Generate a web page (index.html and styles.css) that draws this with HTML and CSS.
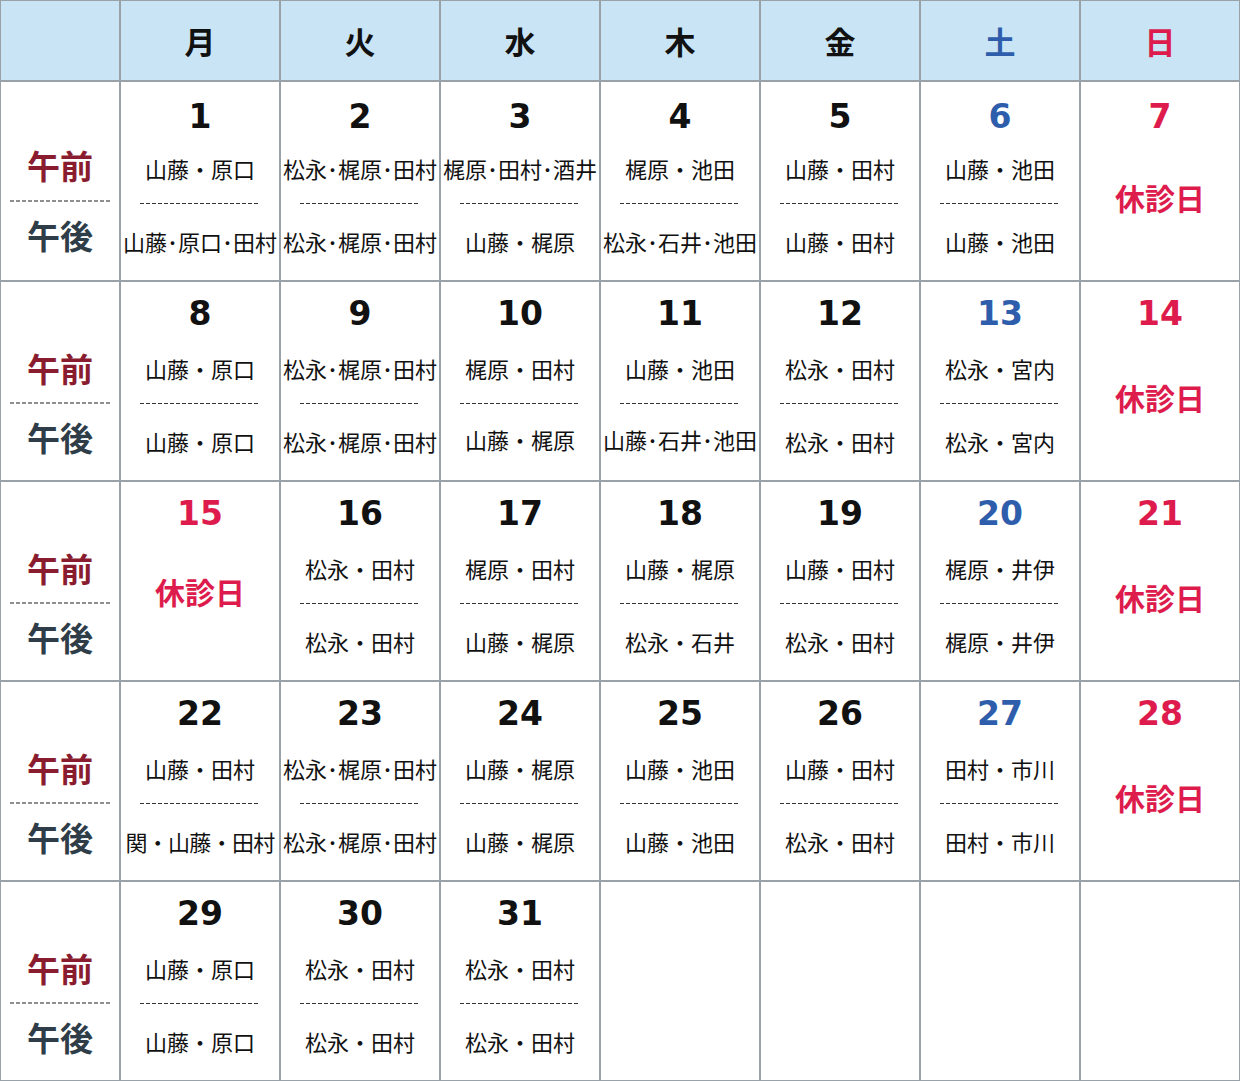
FILE: index.html
```html
<!DOCTYPE html>
<html lang="ja">
<head>
<meta charset="utf-8">
<title>診療担当表</title>
<link rel="stylesheet" href="styles.css">
</head>
<body>
<div class="cal">
  <div class="hd"></div>
  <div class="hd">月</div>
  <div class="hd">火</div>
  <div class="hd">水</div>
  <div class="hd">木</div>
  <div class="hd">金</div>
  <div class="hd sat">土</div>
  <div class="hd sun">日</div>

  <div class="lab first"><div class="am-l">午前</div><div class="dl"></div><div class="pm-l">午後</div></div>
  <div class="day first"><div class="num">1</div><div class="t">山藤・原口</div><div class="dd"></div><div class="t b">山藤･原口･田村</div></div>
  <div class="day first"><div class="num">2</div><div class="t">松永･梶原･田村</div><div class="dd"></div><div class="t b">松永･梶原･田村</div></div>
  <div class="day first"><div class="num">3</div><div class="t">梶原･田村･酒井</div><div class="dd"></div><div class="t b">山藤・梶原</div></div>
  <div class="day first"><div class="num">4</div><div class="t">梶原・池田</div><div class="dd"></div><div class="t b">松永･石井･池田</div></div>
  <div class="day first"><div class="num">5</div><div class="t">山藤・田村</div><div class="dd"></div><div class="t b">山藤・田村</div></div>
  <div class="day first"><div class="num sat">6</div><div class="t">山藤・池田</div><div class="dd"></div><div class="t b">山藤・池田</div></div>
  <div class="day first"><div class="num sun">7</div><div class="off">休診日</div></div>

  <div class="lab"><div class="am-l">午前</div><div class="dl"></div><div class="pm-l">午後</div></div>
  <div class="day"><div class="num">8</div><div class="t">山藤・原口</div><div class="dd"></div><div class="t b">山藤・原口</div></div>
  <div class="day"><div class="num">9</div><div class="t">松永･梶原･田村</div><div class="dd"></div><div class="t b">松永･梶原･田村</div></div>
  <div class="day"><div class="num">10</div><div class="t">梶原・田村</div><div class="dd"></div><div class="t">山藤・梶原</div></div>
  <div class="day"><div class="num">11</div><div class="t">山藤・池田</div><div class="dd"></div><div class="t">山藤･石井･池田</div></div>
  <div class="day"><div class="num">12</div><div class="t">松永・田村</div><div class="dd"></div><div class="t b">松永・田村</div></div>
  <div class="day"><div class="num sat">13</div><div class="t">松永・宮内</div><div class="dd"></div><div class="t b">松永・宮内</div></div>
  <div class="day"><div class="num sun">14</div><div class="off">休診日</div></div>

  <div class="lab"><div class="am-l">午前</div><div class="dl"></div><div class="pm-l">午後</div></div>
  <div class="day"><div class="num sun">15</div><div class="off hi">休診日</div></div>
  <div class="day"><div class="num">16</div><div class="t">松永・田村</div><div class="dd"></div><div class="t b">松永・田村</div></div>
  <div class="day"><div class="num">17</div><div class="t">梶原・田村</div><div class="dd"></div><div class="t b">山藤・梶原</div></div>
  <div class="day"><div class="num">18</div><div class="t">山藤・梶原</div><div class="dd"></div><div class="t b">松永・石井</div></div>
  <div class="day"><div class="num">19</div><div class="t">山藤・田村</div><div class="dd"></div><div class="t b">松永・田村</div></div>
  <div class="day"><div class="num sat">20</div><div class="t">梶原・井伊</div><div class="dd"></div><div class="t b">梶原・井伊</div></div>
  <div class="day"><div class="num sun">21</div><div class="off">休診日</div></div>

  <div class="lab"><div class="am-l">午前</div><div class="dl"></div><div class="pm-l">午後</div></div>
  <div class="day"><div class="num">22</div><div class="t">山藤・田村</div><div class="dd"></div><div class="t b wide">関・山藤・田村</div></div>
  <div class="day"><div class="num">23</div><div class="t">松永･梶原･田村</div><div class="dd"></div><div class="t b">松永･梶原･田村</div></div>
  <div class="day"><div class="num">24</div><div class="t">山藤・梶原</div><div class="dd"></div><div class="t b">山藤・梶原</div></div>
  <div class="day"><div class="num">25</div><div class="t">山藤・池田</div><div class="dd"></div><div class="t b">山藤・池田</div></div>
  <div class="day"><div class="num">26</div><div class="t">山藤・田村</div><div class="dd"></div><div class="t b">松永・田村</div></div>
  <div class="day"><div class="num sat">27</div><div class="t">田村・市川</div><div class="dd"></div><div class="t b">田村・市川</div></div>
  <div class="day"><div class="num sun">28</div><div class="off">休診日</div></div>

  <div class="lab"><div class="am-l">午前</div><div class="dl"></div><div class="pm-l">午後</div></div>
  <div class="day"><div class="num">29</div><div class="t">山藤・原口</div><div class="dd"></div><div class="t b">山藤・原口</div></div>
  <div class="day"><div class="num">30</div><div class="t">松永・田村</div><div class="dd"></div><div class="t b">松永・田村</div></div>
  <div class="day"><div class="num">31</div><div class="t">松永・田村</div><div class="dd"></div><div class="t b">松永・田村</div></div>
  <div class="day"></div>
  <div class="day"></div>
  <div class="day"></div>
  <div class="day"></div>
</div>
</body>
</html>
```

FILE: styles.css
```css
html, body {
  margin: 0;
  padding: 0;
  background: #ffffff;
}

.cal {
  width: 1240px;
  height: 1081px;
  box-sizing: border-box;
  padding: 1px;
  display: grid;
  grid-template-columns: 118px repeat(7, 158px);
  grid-template-rows: 79px repeat(5, 198px);
  gap: 2px;
  background: #99a2a8;
  font-family: "Noto Sans CJK JP", "Noto Sans", sans-serif;
  color: #111111;
}

.hd {
  background: #c9e4f5;
  display: flex;
  align-items: center;
  justify-content: center;
  font-size: 31px;
  font-weight: 700;
  color: #111111;
}

.sat { color: #2e5eab !important; }
.sun { color: #dd1c4d !important; }

.day, .lab {
  background: #ffffff;
  display: flex;
  flex-direction: column;
  align-items: center;
}

.num {
  padding-top: 13px;
  height: 38px;
  line-height: 38px;
  font-family: "DejaVu Sans", Verdana, sans-serif;
  font-weight: 700;
  font-size: 33px;
  color: #111111;
}

.day.first .num {
  padding-top: 16px;
  height: 35px;
}

.t {
  margin-top: 19px;
  height: 32px;
  line-height: 32px;
  font-size: 22px;
  white-space: nowrap;
  color: #111111;
}

.t.b {
  margin-top: 21px;
}

.t.wide {
  letter-spacing: -0.7px;
}

.dd {
  margin-top: 19px;
  width: 120px;
  height: 1px;
  background: repeating-linear-gradient(90deg, #333333 0 4px, transparent 4px 6px);
}

.off {
  margin-top: 44px;
  height: 40px;
  line-height: 40px;
  font-size: 30px;
  font-weight: 700;
  color: #dd1c4d;
}

.off.hi {
  margin-top: 38px;
}

.lab .am-l, .lab .pm-l {
  height: 40px;
  line-height: 40px;
  font-size: 33px;
  font-weight: 700;
}

.am-l {
  margin-top: 66px;
  color: #8a1c2f;
}

.lab.first .am-l {
  margin-top: 63px;
}

.lab.first .dl {
  margin-top: 15px;
}

.dl {
  margin-top: 14px;
  width: 100px;
  height: 2px;
  background: repeating-linear-gradient(90deg, #8f8f8f 0 4px, transparent 4px 6px);
}

.pm-l {
  margin-top: 13px;
  color: #2e3d47;
}
```
